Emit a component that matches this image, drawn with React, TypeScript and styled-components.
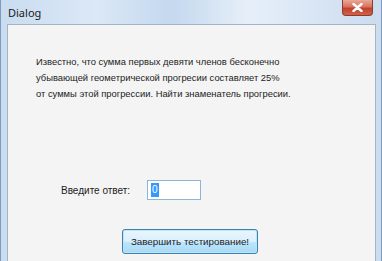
import styled, { createGlobalStyle } from "styled-components";

const GlobalStyle = createGlobalStyle`
  html, body {
    margin: 0;
    padding: 0;
    overflow: hidden;
  }
  body {
    font-family: "Liberation Sans", Arial, sans-serif;
  }
`;

export default function App() {
  return (
    <>
      <GlobalStyle />
      <Window>
        <TitleBar>
          <Title>Dialog</Title>
          <CloseButton aria-label="close">
            <svg width="11" height="9" viewBox="0 0 11 9">
              <path
                d="M1.5 1 L9.5 8 M9.5 1 L1.5 8"
                stroke="#ffffff"
                strokeWidth="2.4"
                strokeLinecap="round"
              />
            </svg>
          </CloseButton>
        </TitleBar>
        <Client>
          <Question>
            Известно, что сумма первых девяти членов бесконечно
            <br />
            убывающей геометрической прогресии составляет 25%
            <br />
            от суммы этой прогрессии. Найти знаменатель прогресии.
          </Question>
          <AnswerRow>
            <Label>Введите ответ:</Label>
            <AnswerInput>
              <Selected>0</Selected>
            </AnswerInput>
          </AnswerRow>
          <FinishButton>Завершить тестирование!</FinishButton>
        </Client>
      </Window>
    </>
  );
}

const Window = styled.div`
  width: 382px;
  height: 261px;
  box-sizing: border-box;
  display: flex;
  flex-direction: column;
  padding: 0 5px 0 6px;
  background: linear-gradient(
    to right,
    #c9dcf0 0%,
    #dbe8f6 25%,
    #c4d8ee 45%,
    #e6eff9 65%,
    #cbdcef 100%
  );
  border-left: 1px solid #7e9bbd;
  border-right: 1px solid #7e9bbd;
`;

const TitleBar = styled.div`
  height: 24px;
  display: flex;
  align-items: flex-start;
  justify-content: space-between;
`;

const Title = styled.span`
  font-family: "Noto Sans", "DejaVu Sans", sans-serif;
  font-size: 11px;
  color: #1a1a1a;
  margin-top: 5px;
  margin-left: 1px;
`;

const CloseButton = styled.div`
  width: 31px;
  height: 16px;
  margin-right: 3px;
  box-sizing: border-box;
  display: flex;
  align-items: center;
  justify-content: center;
  border: 1px solid #8d3b2f;
  border-top: none;
  border-radius: 0 0 4px 4px;
  background: linear-gradient(to bottom, #e9a896 0%, #d77360 45%, #c2402a 55%, #d0644a 100%);
`;

const Client = styled.div`
  flex: 1;
  display: flex;
  flex-direction: column;
  border: 1px solid #a6b3c2;
  border-bottom: none;
  background: #f4f4f4;
  padding: 29px 0 0 28px;
`;

const Question = styled.p`
  margin: 0;
  font-size: 9.4px;
  line-height: 16px;
  color: #1c1c1c;
  white-space: nowrap;
`;

const AnswerRow = styled.div`
  display: flex;
  align-items: center;
  margin-top: 78px;
  margin-left: 25px;
`;

const Label = styled.span`
  font-size: 10px;
  color: #1c1c1c;
  width: 86px;
  white-space: nowrap;
`;

const AnswerInput = styled.div`
  width: 54px;
  height: 20px;
  box-sizing: border-box;
  border: 1px solid #8fb4dc;
  background: #ffffff;
  display: flex;
  align-items: center;
  padding-left: 3px;
`;

const Selected = styled.span`
  font-size: 10px;
  line-height: 14px;
  background: #3399ff;
  color: #ffffff;
  padding: 0 1px;
`;

const FinishButton = styled.div`
  align-self: flex-start;
  margin-top: 29px;
  margin-left: 86px;
  width: 136px;
  height: 25px;
  box-sizing: border-box;
  display: flex;
  align-items: center;
  justify-content: center;
  border: 1px solid #3c7fb1;
  border-radius: 3px;
  box-shadow: inset 0 0 0 1px #bfe5f8;
  background: linear-gradient(to bottom, #eaf6fd 0%, #d9f0fc 50%, #bee6fd 51%, #a7d9f5 100%);
  font-size: 9.8px;
  color: #1c1c1c;
  white-space: nowrap;
`;
